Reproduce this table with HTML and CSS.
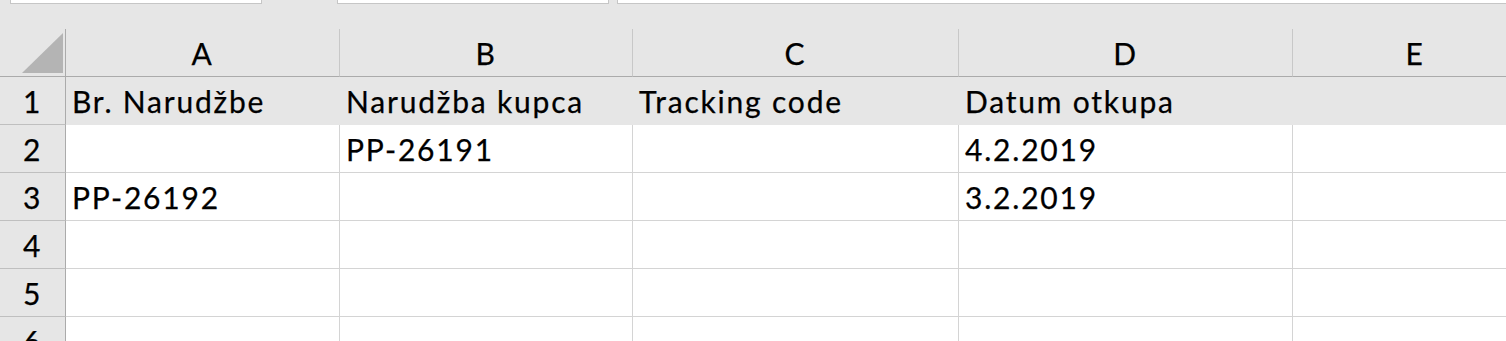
FILE: index.html
```html
<!DOCTYPE html>
<html lang="hr">
<head>
<meta charset="utf-8">
<title>Narudžbe</title>
<link rel="stylesheet" href="styles.css">
</head>
<body>
<div class="topbar">
  <div class="field field-name"></div>
  <div class="field field-mid"></div>
  <div class="field field-formula"></div>
</div>
<div class="sheet">
  <div class="corner"><span class="select-all"></span></div>
  <div class="colhead">A</div>
  <div class="colhead">B</div>
  <div class="colhead">C</div>
  <div class="colhead">D</div>
  <div class="colhead">E</div>

  <div class="rowhead">1</div>
  <div class="cell filled">Br. Narudžbe</div>
  <div class="cell filled">Narudžba kupca</div>
  <div class="cell filled">Tracking code</div>
  <div class="cell filled">Datum otkupa</div>
  <div class="cell filled"></div>

  <div class="rowhead">2</div>
  <div class="cell"></div>
  <div class="cell">PP-26191</div>
  <div class="cell"></div>
  <div class="cell">4.2.2019</div>
  <div class="cell"></div>

  <div class="rowhead">3</div>
  <div class="cell">PP-26192</div>
  <div class="cell"></div>
  <div class="cell"></div>
  <div class="cell">3.2.2019</div>
  <div class="cell"></div>

  <div class="rowhead">4</div>
  <div class="cell"></div>
  <div class="cell"></div>
  <div class="cell"></div>
  <div class="cell"></div>
  <div class="cell"></div>

  <div class="rowhead">5</div>
  <div class="cell"></div>
  <div class="cell"></div>
  <div class="cell"></div>
  <div class="cell"></div>
  <div class="cell"></div>

  <div class="rowhead">6</div>
  <div class="cell"></div>
  <div class="cell"></div>
  <div class="cell"></div>
  <div class="cell"></div>
  <div class="cell"></div>
</div>
</body>
</html>
```

FILE: styles.css
```css
html, body {
  margin: 0;
  padding: 0;
  background: #e6e6e6;
  overflow: hidden;
}

body {
  width: 1506px;
  height: 341px;
  font-family: "Lato", "Open Sans", sans-serif;
  font-size: 30px;
  color: #000;
}

/* name box / formula bar strip */
.topbar {
  display: flex;
  height: 29px;
  padding-left: 10px;
  box-sizing: border-box;
}

.field {
  height: 4px;
  background: #fff;
  border: 1px solid #c6c6c6;
  border-top: none;
  box-sizing: border-box;
}

.field-name { width: 252px; }
.field-mid { width: 272px; margin-left: 75px; }
.field-formula { flex: 1; margin-left: 8px; margin-right: -4px; }

/* worksheet grid; column E runs past the window edge */
.sheet {
  display: grid;
  grid-template-columns: 66px 274px 293px 326px 334px 245px;
  grid-auto-rows: 48px;
}

.sheet > div {
  box-sizing: border-box;
  line-height: 47px;
  padding-top: 1px;
  white-space: nowrap;
  overflow: hidden;
  letter-spacing: 1.8px;
  -webkit-text-stroke: 0.25px #000;
}

.corner {
  display: flex;
  justify-content: flex-end;
  align-items: flex-end;
  padding: 0 2px 3px 0;
  border-right: 1px solid #ababab;
  border-bottom: 1px solid #ababab;
}

.select-all {
  width: 41px;
  height: 40px;
  background: #b4b4b4;
  clip-path: polygon(100% 0, 100% 100%, 0 100%);
}

.colhead {
  text-align: center;
  background: #e6e6e6;
  border-right: 1px solid #c8c8c8;
  border-bottom: 1px solid #ababab;
}

.rowhead {
  text-align: center;
  background: #e6e6e6;
  border-right: 1px solid #ababab;
  border-bottom: 1px solid #bfbfbf;
}

.cell {
  background: #fff;
  padding-left: 6px;
  border-right: 1px solid #d4d4d4;
  border-bottom: 1px solid #d4d4d4;
}

.cell.filled {
  background: #e6e6e6;
  border-color: #e6e6e6;
}
```
